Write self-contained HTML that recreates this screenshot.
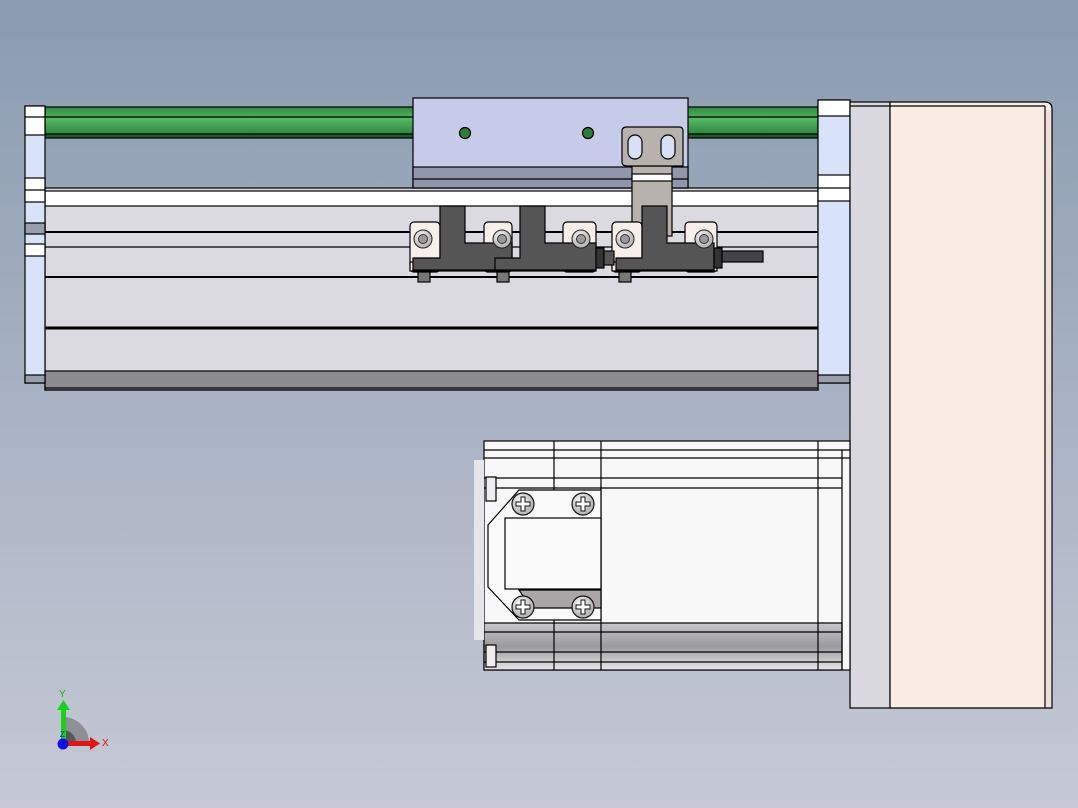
<!DOCTYPE html>
<html><head><meta charset="utf-8"><style>
html,body{margin:0;padding:0;width:1078px;height:808px;overflow:hidden}
svg{display:block}
</style></head><body>
<svg width="1078" height="808" viewBox="0 0 1078 808" xmlns="http://www.w3.org/2000/svg" font-family="Liberation Sans, sans-serif">
<defs>
<linearGradient id="bg" x1="0" y1="0" x2="0" y2="1"><stop offset="0" stop-color="#8a9bb0"/><stop offset="1" stop-color="#c6c9d5"/></linearGradient>
<linearGradient id="gr" x1="0" y1="0" x2="0" y2="1"><stop offset="0" stop-color="#2f8a3e"/><stop offset=".4" stop-color="#55b864"/><stop offset="1" stop-color="#2a7a36"/></linearGradient>
<linearGradient id="cyl" x1="0" y1="0" x2="0" y2="1"><stop offset="0" stop-color="#c8c8cc"/><stop offset=".5" stop-color="#9a9a9e"/><stop offset="1" stop-color="#e8e8ea"/></linearGradient>
<radialGradient id="scr" cx=".4" cy=".35"><stop offset="0" stop-color="#fff"/><stop offset="1" stop-color="#bbb"/></radialGradient>
<g id="phil"><circle r="11" fill="url(#scr)" stroke="#111" stroke-width="1.2"/><path d="M-2,-7h4v5h5v4h-5v5h-4v-5h-5v-4h5z" fill="#fff" stroke="#111" stroke-width="1"/></g>
<g id="hex"><circle r="9" fill="url(#scr)" stroke="#222"/><circle r="4.5" fill="#999" stroke="#333"/></g>
</defs>
<rect width="1078" height="808" fill="url(#bg)"/>
<g stroke="#000" stroke-width="1.2">
<!-- green rod -->
<rect x="45" y="107" width="773" height="30" fill="url(#gr)"/>
<line x1="45" y1="117" x2="818" y2="117"/>
<rect x="45" y="134" width="773" height="4" fill="#1f5a28"/>
<!-- main body -->
<rect x="45" y="188" width="773" height="202" fill="#dadae0"/>
<rect x="45" y="191" width="773" height="15" fill="#fff"/>
<line x1="45" y1="232" x2="818" y2="232" stroke-width="2"/>
<line x1="45" y1="247" x2="818" y2="247"/>
<line x1="45" y1="277" x2="818" y2="277" stroke-width="2"/>
<line x1="45" y1="328" x2="818" y2="328" stroke-width="3"/>
<rect x="45" y="371" width="773" height="19" fill="#8b8b90"/>
<line x1="45" y1="388" x2="818" y2="388"/>
<!-- left end cap -->
<rect x="25" y="106" width="20" height="277" fill="#d8e2f8"/>
<rect x="25" y="106" width="20" height="29" fill="#fff"/>
<line x1="25" y1="117" x2="45" y2="117"/>
<rect x="25" y="178" width="20" height="24" fill="#fff"/>
<line x1="25" y1="190" x2="45" y2="190"/>
<rect x="25" y="223" width="20" height="11" fill="#9a9eac"/>
<rect x="25" y="244" width="20" height="12" fill="#fff"/>
<rect x="25" y="375" width="20" height="8" fill="#9a9eac"/>
<!-- right end cap -->
<rect x="818" y="100" width="32" height="283" fill="#d8e2f8"/>
<rect x="818" y="100" width="32" height="16" fill="#fff"/>
<rect x="818" y="175" width="32" height="26" fill="#fff"/>
<line x1="818" y1="188" x2="850" y2="188"/>
<rect x="818" y="375" width="32" height="8" fill="#9a9eac"/>
<!-- motor plate -->
<rect x="850" y="102" width="40" height="606" fill="#d9d9df"/>
<path d="M890,102H1045q7,0 7,7V708H890z" fill="#f9ece4"/>
<line x1="1045" y1="106" x2="1045" y2="708"/>
<line x1="850" y1="106" x2="1045" y2="106"/>
<rect x="1046" y="110" width="5" height="597" fill="#f1dede" stroke="none"/>
<!-- carriage -->
<rect x="413" y="98" width="275" height="90" fill="#c5cbe8"/>
<rect x="413" y="167" width="275" height="21" fill="#9196ad"/>
<line x1="413" y1="179" x2="688" y2="179"/>
<circle cx="465" cy="133" r="5.5" fill="#2f7d3a"/>
<circle cx="588" cy="133" r="5.5" fill="#2f7d3a"/>
<!-- bracket -->
<rect x="632" y="166" width="40" height="70" fill="#b8b2ad"/>
<rect x="632" y="174" width="40" height="7" fill="#fff"/>
<path d="M627,127H679q4,0 4,4V166H627q-5,0 -5,-4V131q0,-4 5,-4z" fill="#b8b2ad"/>
<rect x="628" y="135" width="14" height="24" rx="7" fill="#d8e0f6"/>
<rect x="661" y="135" width="14" height="24" rx="7" fill="#d8e0f6"/>
<!-- sensors -->
<g fill="#f8eeea"><rect x="410" y="222" width="30" height="50" rx="4"/><rect x="484" y="222" width="28" height="50" rx="4"/><rect x="563" y="222" width="33" height="50" rx="4"/><rect x="612" y="222" width="30" height="50" rx="4"/><rect x="685" y="222" width="32" height="50" rx="4"/></g>
<rect x="410" y="262" width="186" height="9" fill="#f8eeea"/>
<rect x="612" y="262" width="105" height="9" fill="#f8eeea"/>
<path d="M440,206H465V243H512V270H413V258H440z" fill="#555"/>
<path d="M520,206H545V243H596V270H495V258H520z" fill="#555"/>
<path d="M642,206H667V243H714V270H616V258H642z" fill="#555"/>
<rect x="596" y="248" width="8" height="20" fill="#333"/>
<rect x="604" y="251" width="10" height="14" fill="#555"/>
<rect x="714" y="248" width="8" height="20" fill="#333"/>
<rect x="722" y="251" width="41" height="11" fill="#444"/>
<g fill="#777"><rect x="418" y="272" width="12" height="10"/><rect x="497" y="272" width="12" height="10"/><rect x="619" y="272" width="12" height="10"/></g>
</g>
<use href="#hex" x="423" y="239"/><use href="#hex" x="502" y="239"/><use href="#hex" x="581" y="239"/><use href="#hex" x="625" y="239"/><use href="#hex" x="704" y="239"/>
<!-- motor -->
<g stroke="#000" stroke-width="1.2">
<rect x="484" y="441" width="366" height="229" fill="#f8f8f8"/>
<line x1="484" y1="450" x2="850" y2="450"/><line x1="484" y1="458" x2="850" y2="458"/>
<line x1="484" y1="478" x2="842" y2="478"/><line x1="484" y1="488" x2="842" y2="488"/>
<rect x="484" y="623" width="358" height="47" fill="url(#cyl)"/>
<line x1="484" y1="632" x2="842" y2="632"/><line x1="484" y1="652" x2="842" y2="652"/><line x1="484" y1="662" x2="842" y2="662"/>
<line x1="554" y1="441" x2="554" y2="490"/><line x1="554" y1="620" x2="554" y2="670"/>
<line x1="601" y1="441" x2="601" y2="670"/><line x1="818" y1="441" x2="818" y2="670"/><line x1="842" y1="450" x2="842" y2="670"/>
<rect x="474" y="460" width="10" height="180" fill="#e6e6ea" stroke="none"/>
<path d="M519,490H601V620H519L488,587V525z" fill="#fafafa"/>
<path d="M519,590H601V608H531z" fill="#aaa6a8"/>
<rect x="505" y="518" width="96" height="71" fill="#fafafa"/>
<rect x="486" y="477" width="10" height="24" fill="#eee"/><rect x="486" y="645" width="10" height="22" fill="#eee"/>
</g>
<use href="#phil" x="523" y="504"/><use href="#phil" x="583" y="504"/><use href="#phil" x="523" y="607"/><use href="#phil" x="583" y="607"/>
<!-- triad -->
<path d="M63,743V717A26,26 0 0 1 89,743z" fill="#8e9096"/>
<path d="M63,743V730A13,13 0 0 1 76,743z" fill="#55575c"/>
<rect x="61" y="708" width="5" height="35" fill="#19d119"/><path d="M57,710L63.5,700L70,710z" fill="#19d119"/>
<rect x="63" y="741" width="28" height="5" fill="#e01515"/><path d="M90,737L100,743.5L90,750z" fill="#e01515"/>
<circle cx="63" cy="744" r="5.5" fill="#1010e0"/>
<text x="59" y="697" font-size="10" fill="#19b019">Y</text>
<text x="102" y="746" font-size="10" fill="#e01515">X</text>
<text x="60" y="737" font-size="8" fill="#1010e0">Z</text>
</svg>
</body></html>
